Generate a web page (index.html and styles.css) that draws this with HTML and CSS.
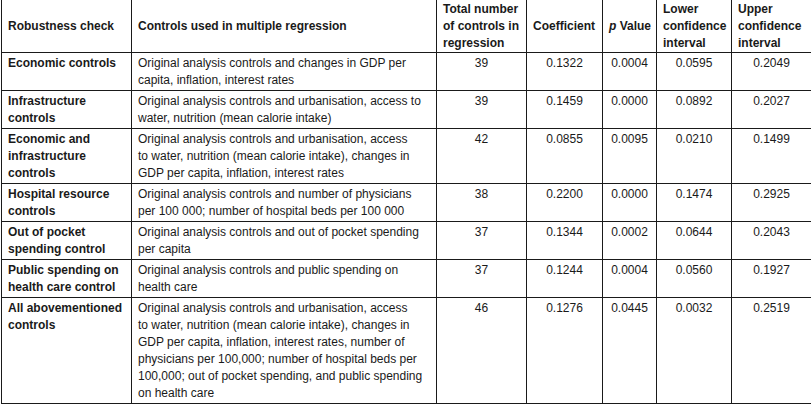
FILE: index.html
```html
<!DOCTYPE html>
<html>
<head>
<meta charset="utf-8">
<link rel="stylesheet" href="styles.css">
</head>
<body>
<table class="results">
  <colgroup>
    <col class="c-check">
    <col class="c-controls">
    <col class="c-total">
    <col class="c-coef">
    <col class="c-p">
    <col class="c-lower">
    <col class="c-upper">
  </colgroup>
  <thead>
    <tr>
      <th>Robustness check</th>
      <th>Controls used in multiple regression</th>
      <th>Total number<br>of controls in<br>regression</th>
      <th>Coefficient</th>
      <th><i>p</i> Value</th>
      <th>Lower<br>confidence<br>interval</th>
      <th>Upper<br>confidence<br>interval</th>
    </tr>
  </thead>
  <tbody>
    <tr>
      <th>Economic controls</th>
      <td>Original analysis controls and changes in GDP per<br>capita, inflation, interest rates</td>
      <td class="num">39</td><td class="num">0.1322</td><td class="num">0.0004</td><td class="num">0.0595</td><td class="num">0.2049</td>
    </tr>
    <tr>
      <th>Infrastructure<br>controls</th>
      <td>Original analysis controls and urbanisation, access to<br>water, nutrition (mean calorie intake)</td>
      <td class="num">39</td><td class="num">0.1459</td><td class="num">0.0000</td><td class="num">0.0892</td><td class="num">0.2027</td>
    </tr>
    <tr>
      <th>Economic and<br>infrastructure<br>controls</th>
      <td>Original analysis controls and urbanisation, access<br>to water, nutrition (mean calorie intake), changes in<br>GDP per capita, inflation, interest rates</td>
      <td class="num">42</td><td class="num">0.0855</td><td class="num">0.0095</td><td class="num">0.0210</td><td class="num">0.1499</td>
    </tr>
    <tr>
      <th>Hospital resource<br>controls</th>
      <td>Original analysis controls and number of physicians<br>per 100 000; number of hospital beds per 100 000</td>
      <td class="num">38</td><td class="num">0.2200</td><td class="num">0.0000</td><td class="num">0.1474</td><td class="num">0.2925</td>
    </tr>
    <tr>
      <th>Out of pocket<br>spending control</th>
      <td>Original analysis controls and out of pocket spending<br>per capita</td>
      <td class="num">37</td><td class="num">0.1344</td><td class="num">0.0002</td><td class="num">0.0644</td><td class="num">0.2043</td>
    </tr>
    <tr>
      <th>Public spending on<br>health care control</th>
      <td>Original analysis controls and public spending on<br>health care</td>
      <td class="num">37</td><td class="num">0.1244</td><td class="num">0.0004</td><td class="num">0.0560</td><td class="num">0.1927</td>
    </tr>
    <tr>
      <th>All abovementioned<br>controls</th>
      <td>Original analysis controls and urbanisation, access<br>to water, nutrition (mean calorie intake), changes in<br>GDP per capita, inflation, interest rates, number of<br>physicians per 100,000; number of hospital beds per<br>100,000; out of pocket spending, and public spending<br>on health care</td>
      <td class="num">46</td><td class="num">0.1276</td><td class="num">0.0445</td><td class="num">0.0032</td><td class="num">0.2519</td>
    </tr>
  </tbody>
</table>
</body>
</html>
```

FILE: styles.css
```css
html, body {
  margin: 0;
  padding: 0;
  background: #ffffff;
}

body {
  font-family: "Liberation Sans", Arial, sans-serif;
  font-size: 12px;
  color: #1a1a1a;
}

.results {
  border-collapse: collapse;
  table-layout: fixed;
  width: 810px;
  margin: -1px 0 0 1px;
}

.c-check { width: 130px; }
.c-controls { width: 305px; }
.c-total { width: 90px; }
.c-coef { width: 76px; }
.c-p { width: 54px; }
.c-lower { width: 75px; }
.c-upper { width: 80px; }

.results th,
.results td {
  border: 1px solid #1a1a1a;
  padding: 2px 6px 1px;
  line-height: 17px;
  text-align: left;
  vertical-align: top;
  white-space: nowrap;
}

.results th {
  font-weight: bold;
}

.results thead th {
  vertical-align: middle;
  padding-top: 1px;
  padding-bottom: 0;
}

.results td.num {
  text-align: center;
}
```
